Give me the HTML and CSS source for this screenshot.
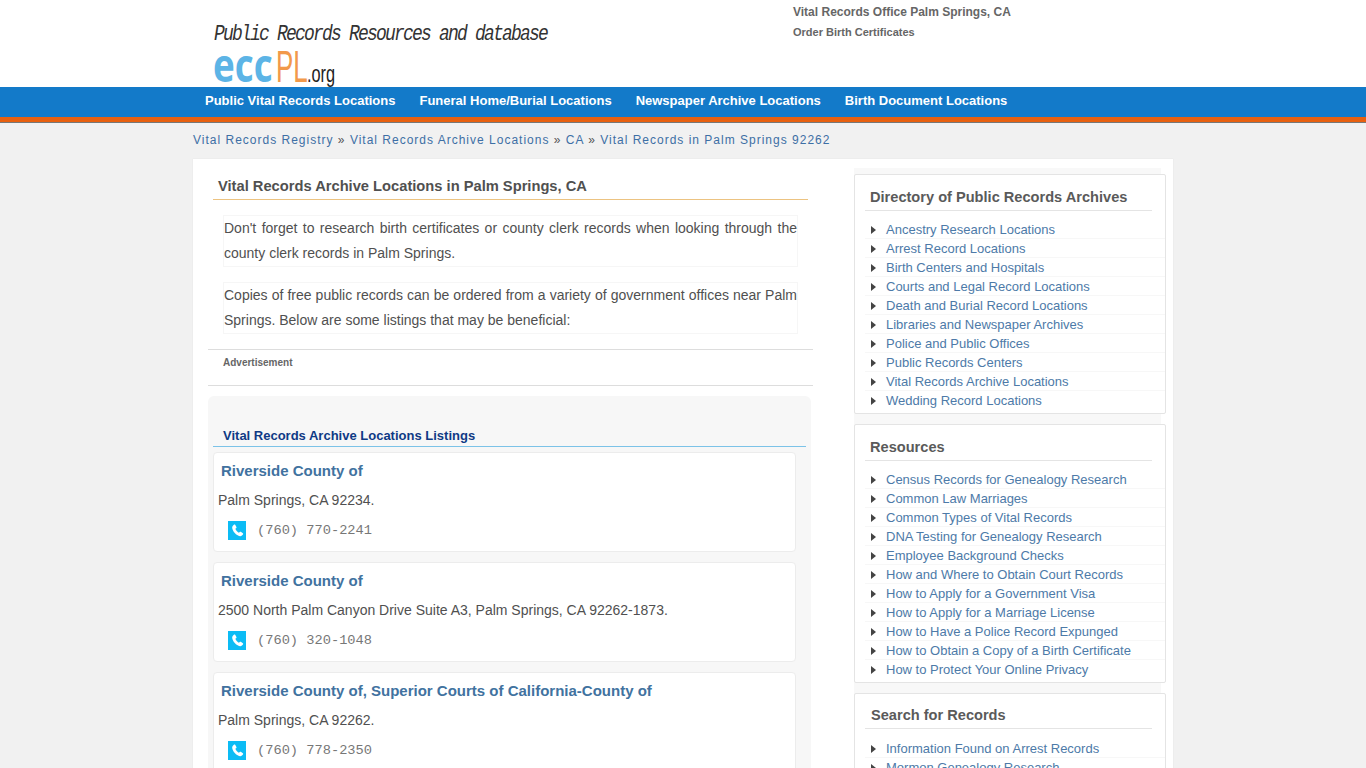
FILE: index.html
```html
<!DOCTYPE html>
<html lang="en">
<head>
<meta charset="UTF-8">
<meta name="viewport" content="width=device-width, initial-scale=1.0">
<title>Vital Records Office Palm Springs, CA</title>
<link rel="stylesheet" href="styles.css">
</head>
<body>
  <header class="top">
    <div class="wrap top-inner">
      <a class="logo" href="#">
        <span class="logo-tag">Public Records Resources and database</span>
        <span class="logo-name"><span class="logo-ecc">ecc</span><span class="logo-pl">PL</span><span class="logo-org">.org</span></span>
      </a>
      <div class="top-links">
        <a href="#">Vital Records Office Palm Springs, CA</a>
        <a class="small" href="#">Order Birth Certificates</a>
      </div>
    </div>
  </header>

  <nav class="nav">
    <div class="wrap nav-inner">
      <a href="#">Public Vital Records Locations</a>
      <a href="#">Funeral Home/Burial Locations</a>
      <a href="#">Newspaper Archive Locations</a>
      <a href="#">Birth Document Locations</a>
    </div>
  </nav>

  <div class="wrap crumbs">
    <a href="#">Vital Records Registry</a> <span>»</span>
    <a href="#">Vital Records Archive Locations</a> <span>»</span>
    <a href="#">CA</a> <span>»</span>
    <a href="#">Vital Records in Palm Springs 92262</a>
  </div>

  <div class="wrap panel">
    <main class="main">
      <h1 class="title">Vital Records Archive Locations in Palm Springs, CA</h1>
      <p class="intro">Don't forget to research birth certificates or county clerk records when looking through the county clerk records in Palm Springs.</p>
      <p class="intro">Copies of free public records can be ordered from a variety of government offices near Palm Springs. Below are some listings that may be beneficial:</p>

      <div class="ad">Advertisement</div>

      <section class="listings">
        <h2 class="listings-title">Vital Records Archive Locations Listings</h2>

        <div class="card">
          <h3><a href="#">Riverside County of</a></h3>
          <p class="addr">Palm Springs, CA 92234.</p>
          <div class="phone">
            <span class="phone-icon"><svg viewBox="0 0 24 24" width="15" height="15"><path fill="#fff" d="M6.6 2.5c.6-.4 1.3-.2 1.7.4l2 3.4c.3.6.2 1.2-.2 1.6L8.600 9.300c.9 2.500 3.200 5.100 5.600 6.300l1.500-1.400c.5-.4 1.100-.5 1.600-.1l3.300 2.200c.6.400.7 1.200.3 1.700-1.100 1.600-2.800 3.500-4.900 3.100C9.800 19.900 4.400 13.600 3.500 8.100 3.200 5.900 5 3.600 6.600 2.500z"/></svg></span>
            <span>(760) 770-2241</span>
          </div>
        </div>

        <div class="card">
          <h3><a href="#">Riverside County of</a></h3>
          <p class="addr">2500 North Palm Canyon Drive Suite A3, Palm Springs, CA 92262-1873.</p>
          <div class="phone">
            <span class="phone-icon"><svg viewBox="0 0 24 24" width="15" height="15"><path fill="#fff" d="M6.6 2.5c.6-.4 1.3-.2 1.7.4l2 3.4c.3.6.2 1.2-.2 1.6L8.600 9.300c.9 2.500 3.200 5.100 5.600 6.300l1.500-1.400c.5-.4 1.100-.5 1.600-.1l3.300 2.200c.6.400.7 1.200.3 1.700-1.100 1.600-2.800 3.500-4.900 3.100C9.800 19.900 4.400 13.600 3.500 8.100 3.200 5.900 5 3.600 6.600 2.500z"/></svg></span>
            <span>(760) 320-1048</span>
          </div>
        </div>

        <div class="card">
          <h3><a href="#">Riverside County of, Superior Courts of California-County of</a></h3>
          <p class="addr">Palm Springs, CA 92262.</p>
          <div class="phone">
            <span class="phone-icon"><svg viewBox="0 0 24 24" width="15" height="15"><path fill="#fff" d="M6.6 2.5c.6-.4 1.3-.2 1.7.4l2 3.4c.3.6.2 1.2-.2 1.6L8.600 9.300c.9 2.500 3.200 5.100 5.600 6.300l1.500-1.400c.5-.4 1.100-.5 1.600-.1l3.300 2.200c.6.400.7 1.200.3 1.700-1.100 1.600-2.800 3.500-4.900 3.100C9.800 19.900 4.400 13.600 3.500 8.100 3.200 5.900 5 3.600 6.600 2.500z"/></svg></span>
            <span>(760) 778-2350</span>
          </div>
        </div>
      </section>
    </main>

    <aside class="side">
      <div class="box">
        <h4>Directory of Public Records Archives</h4>
        <ul>
          <li><a href="#">Ancestry Research Locations</a></li>
          <li><a href="#">Arrest Record Locations</a></li>
          <li><a href="#">Birth Centers and Hospitals</a></li>
          <li><a href="#">Courts and Legal Record Locations</a></li>
          <li><a href="#">Death and Burial Record Locations</a></li>
          <li><a href="#">Libraries and Newspaper Archives</a></li>
          <li><a href="#">Police and Public Offices</a></li>
          <li><a href="#">Public Records Centers</a></li>
          <li><a href="#">Vital Records Archive Locations</a></li>
          <li><a href="#">Wedding Record Locations</a></li>
        </ul>
      </div>

      <div class="box">
        <h4>Resources</h4>
        <ul>
          <li><a href="#">Census Records for Genealogy Research</a></li>
          <li><a href="#">Common Law Marriages</a></li>
          <li><a href="#">Common Types of Vital Records</a></li>
          <li><a href="#">DNA Testing for Genealogy Research</a></li>
          <li><a href="#">Employee Background Checks</a></li>
          <li><a href="#">How and Where to Obtain Court Records</a></li>
          <li><a href="#">How to Apply for a Government Visa</a></li>
          <li><a href="#">How to Apply for a Marriage License</a></li>
          <li><a href="#">How to Have a Police Record Expunged</a></li>
          <li><a href="#">How to Obtain a Copy of a Birth Certificate</a></li>
          <li><a href="#">How to Protect Your Online Privacy</a></li>
        </ul>
      </div>

      <div class="box box-search">
        <h4>Search for Records</h4>
        <ul>
          <li><a href="#">Information Found on Arrest Records</a></li>
          <li><a href="#">Mormon Genealogy Research</a></li>
        </ul>
      </div>
    </aside>
  </div>
</body>
</html>
```

FILE: styles.css
```css
html {
  height: 768px;
  overflow: hidden;
}

body {
  margin: 0;
  height: 768px;
  overflow: hidden;
  background-color: #f1f1f1;
  color: #505050;
  font-family: "Liberation Sans", Arial, sans-serif;
  font-size: 14px;
}

a {
  text-decoration: none;
}

.wrap {
  width: 980px;
  margin: 0 auto;
}

/* header */
.top {
  background-color: #fff;
  height: 87px;
}

.top-inner {
  display: flex;
  justify-content: space-between;
}

.logo {
  display: flex;
  flex-direction: column;
  padding: 23px 0 0 21px;
}

.logo-tag {
  font-family: "Liberation Mono", monospace;
  font-style: italic;
  font-size: 18px;
  line-height: 22px;
  letter-spacing: -1.8px;
  color: #333;
  white-space: nowrap;
  transform: scaleY(1.2);
}

.logo-name {
  display: flex;
  align-items: baseline;
  height: 40px;
  line-height: 40px;
  margin: -1px 0 0 -1px;
}

.logo-ecc {
  width: 63px;
  font-family: "Open Sans", sans-serif;
  font-size: 46px;
  font-weight: 700;
  color: #5cb4e6;
  transform: scaleX(0.8);
  transform-origin: left;
}

.logo-pl {
  width: 31px;
  font-size: 44px;
  color: #f2994a;
  transform: scaleX(0.59);
  transform-origin: left;
}

.logo-org {
  font-size: 24px;
  color: #222;
  transform: scaleX(0.68);
  transform-origin: left;
}

.top-links {
  display: flex;
  flex-direction: column;
  width: 380px;
  padding-top: 2px;
}

.top-links a {
  font-size: 12px;
  font-weight: bold;
  color: #666;
  line-height: 20px;
}

.top-links .small {
  font-size: 11px;
}

/* nav */
.nav {
  background-color: #137ac9;
  height: 30px;
  border-bottom: 5px solid #e8600f;
  box-shadow: 0 1px 0 #777;
}

.nav-inner {
  display: flex;
  gap: 24px;
  padding-left: 12px;
  box-sizing: border-box;
}

.nav a {
  color: #fff;
  font-size: 13px;
  font-weight: bold;
  line-height: 27px;
}

/* breadcrumb */
.crumbs {
  height: 37px;
  line-height: 36px;
  font-size: 12px;
  letter-spacing: 1px;
  color: #555;
}

.crumbs a {
  color: #3d6fa5;
}

/* panel */
.panel {
  background-color: #fff;
  display: flex;
  box-sizing: border-box;
  height: 700px;
  padding: 0 7px 0 15px;
  justify-content: space-between;
  box-shadow: 0 0 1px #ddd;
}

.main {
  width: 605px;
  padding-top: 17px;
}

.title {
  margin: 0 0 15px 5px;
  padding: 0 5px 3px;
  width: 595px;
  box-sizing: border-box;
  border-bottom: 1px solid #ecc381;
  font-size: 14.7px;
  line-height: 20px;
  color: #505050;
}

.intro {
  margin: 0 15px 15px;
  border: 1px solid #f6f6f6;
  line-height: 25px;
  text-align: justify;
  color: #505050;
}

.ad {
  border-top: 1px solid #ddd;
  border-bottom: 1px solid #ddd;
  padding: 7px 15px 0;
  box-sizing: border-box;
  height: 37px;
  font-size: 10px;
  font-weight: bold;
  line-height: 12px;
  color: #666;
}

.listings {
  margin-top: 10px;
  width: 603px;
  background-color: #f7f7f7;
  border-radius: 6px;
  padding: 32px 5px 10px;
  box-sizing: border-box;
}

.listings-title {
  margin: 0 0 5px;
  padding: 0 10px 2px;
  border-bottom: 1px solid #7cc3e8;
  font-size: 13px;
  line-height: 16px;
  color: #0f3a85;
}

.card {
  width: 583px;
  height: 100px;
  box-sizing: border-box;
  margin-bottom: 10px;
  background-color: #fff;
  border: 1px solid #ececec;
  border-radius: 4px;
  padding: 8px 4px 0;
}

.card h3 {
  margin: 0 0 0 3px;
  font-size: 15px;
  line-height: 20px;
}

.card h3 a {
  color: #41729f;
}

.addr {
  margin: 9px 0 0;
  line-height: 20px;
  color: #505050;
}

.phone {
  display: flex;
  align-items: center;
  gap: 11px;
  margin: 11px 0 0 10px;
  font-family: "Liberation Mono", monospace;
  font-size: 13.7px;
  color: #777;
}

.phone-icon {
  display: flex;
  align-items: center;
  justify-content: center;
  width: 18px;
  height: 19px;
  background-color: #0cbcf5;
}

/* sidebar */
.side {
  width: 312px;
  margin-top: 9px;
  padding-top: 6px;
  background: linear-gradient(#f8f8f8, #f8f8f8) no-repeat left top / 307px 100%;
}

.box {
  background-color: #fff;
  border: 1px solid #e4e4e4;
  border-radius: 2px;
  margin-bottom: 10px;
  padding: 12px 0 3px 10px;
}

.box h4 {
  margin: 0 13px 9px 0;
  padding: 0 0 3px 5px;
  border-bottom: 1px solid #e4e4e4;
  font-size: 14.6px;
  line-height: 20px;
  color: #5a5a5a;
}

.box-search h4 {
  margin-top: -1px;
  margin-bottom: 10px;
  padding-left: 6px;
}

.box ul {
  list-style: none;
  margin: 0;
  padding: 0;
}

.box li {
  position: relative;
  height: 19px;
  box-sizing: border-box;
  padding-left: 21px;
  font-size: 13px;
  line-height: 20px;
  border-bottom: 1px solid #f7f7f7;
}

.box li:last-child {
  border-bottom: 0;
}

.box li::before {
  content: "";
  position: absolute;
  left: 6px;
  top: 6px;
  border-left: 5px solid #444;
  border-top: 4px solid transparent;
  border-bottom: 4px solid transparent;
}

.box li a {
  color: #4d7aa8;
}
```
